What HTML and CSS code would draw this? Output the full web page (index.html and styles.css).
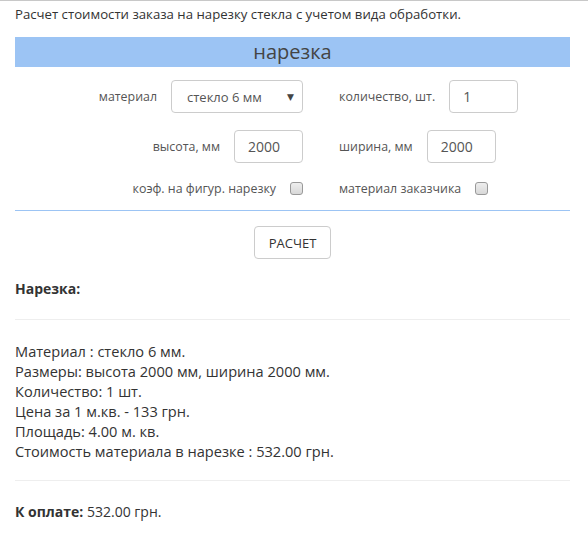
FILE: index.html
```html
<!DOCTYPE html>
<html lang="ru">
<head>
<meta charset="utf-8">
<link rel="stylesheet" href="styles.css">
</head>
<body>
<div class="topline"></div>
<div class="page">
  <p class="intro">Расчет стоимости заказа на нарезку стекла с учетом вида обработки.</p>
  <div class="band">нарезка</div>
  <div class="form">
    <div class="cell left">
      <span class="lbl">материал</span>
      <div class="select"><span>стекло 6 мм</span><span class="arrow">▼</span></div>
    </div>
    <div class="cell right">
      <span class="lbl">количество, шт.</span>
      <div class="input">1</div>
    </div>
    <div class="cell left">
      <span class="lbl">высота, мм</span>
      <div class="input">2000</div>
    </div>
    <div class="cell right">
      <span class="lbl">ширина, мм</span>
      <div class="input">2000</div>
    </div>
    <div class="cell left check">
      <span class="lbl">коэф. на фигур. нарезку</span>
      <input type="checkbox" class="cb">
    </div>
    <div class="cell right check">
      <span class="lbl">материал заказчика</span>
      <input type="checkbox" class="cb">
    </div>
  </div>
  <div class="blue-rule"></div>
  <div class="btn-row"><button class="btn">РАСЧЕТ</button></div>
  <p class="heading"><b>Нарезка:</b></p>
  <hr class="rule">
  <div class="details">
    <div>Материал : стекло 6 мм.</div>
    <div>Размеры: высота 2000 мм, ширина 2000 мм.</div>
    <div>Количество: 1 шт.</div>
    <div>Цена за 1 м.кв. - 133 грн.</div>
    <div>Площадь: 4.00 м. кв.</div>
    <div>Стоимость материала в нарезке : 532.00 грн.</div>
  </div>
  <hr class="rule">
  <p class="total"><b>К оплате:</b> 532.00 грн.</p>
</div>
</body>
</html>
```
FILE: styles.css
```css
* { box-sizing: border-box; }
html, body { margin: 0; padding: 0; background: #fff; }
body {
  font-family: "Open Sans", "DejaVu Sans", sans-serif;
  font-size: 14px;
  color: #333;
}
.topline { height: 2px; border-top: 1px solid #c8c8c8; }
.page { width: 555px; margin-left: 15px; }
.intro { margin: 0; height: 35px; padding-top: 2px; line-height: 20px; font-size: 13.2px; }
.band {
  background: #9cc4f4;
  height: 30px;
  line-height: 30px;
  text-align: center;
  font-size: 20px;
  color: #444;
}
.form {
  display: grid;
  grid-template-columns: 288px 1fr;
  column-gap: 36px;
  row-gap: 17px;
  padding-top: 13px;
}
.cell { display: flex; align-items: center; gap: 14px; }
.cell.left { justify-content: flex-end; }
.cell.right { justify-content: flex-start; }
.lbl { font-size: 12.4px; color: #555; }
.select {
  width: 132px; height: 33px;
  border: 1px solid #ccc; border-radius: 4px;
  display: flex; align-items: center; justify-content: space-between;
  padding: 0 8px 0 15px;
  font-size: 13px; color: #555;
}
.arrow { font-size: 9px; color: #444; }
.input {
  width: 69px; height: 33px;
  border: 1px solid #ccc; border-radius: 4px;
  display: flex; align-items: center;
  padding-left: 13px;
  font-size: 14px; color: #555;
}
.check { height: 20px; margin-top: -2px; }
.cb {
  appearance: none; -webkit-appearance: none;
  width: 13px; height: 13px; margin: 0;
  border: 1px solid #999; border-radius: 3px;
  background: linear-gradient(#eee, #d8d8d8);
}
.blue-rule { height: 1px; background: #9cc4f4; margin-top: 12px; }
.btn-row { display: flex; justify-content: center; padding-top: 15px; }
.btn {
  width: 77px; height: 33px;
  border: 1px solid #ccc; border-radius: 4px;
  background: #fff;
  font-family: inherit; font-size: 13px; color: #333;
}
.heading { margin: 20px 0 0; line-height: 20px; }
.rule { border: 0; border-top: 1px solid #eee; margin: 20px 0 0; }
.details { padding-top: 21px; line-height: 20px; font-size: 14.6px; }
.details + .rule { margin-top: 19px; }
.total { margin: 21px 0 0; line-height: 20px; }
```
